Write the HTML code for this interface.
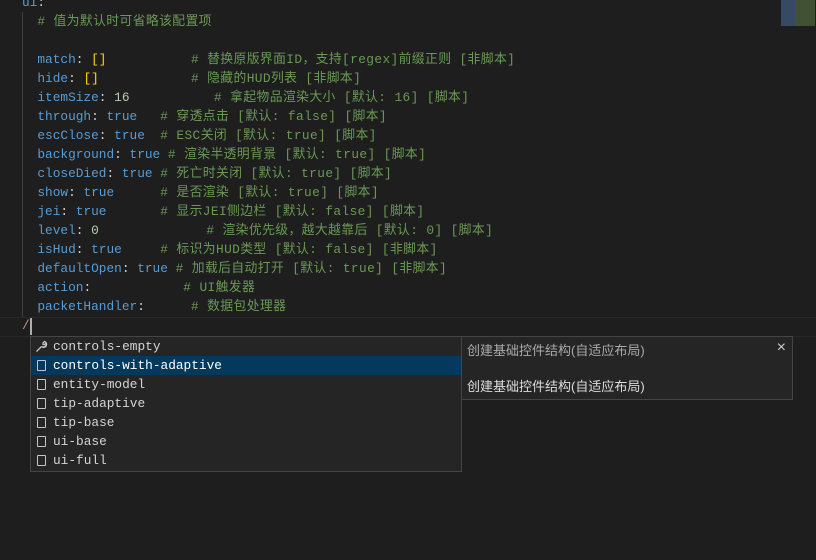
<!DOCTYPE html>
<html><head><meta charset="utf-8"><style>
body{margin:0;width:816px;height:560px;background:#1e1e1e;overflow:hidden;position:relative;font-family:"Liberation Mono","Noto Sans CJK SC",monospace;font-size:12.8px;}
.l{position:absolute;left:22px;height:19px;line-height:19px;white-space:pre;color:#d4d4d4}
.k{color:#569cd6}.v{color:#569cd6}.n{color:#b5cea8}.c{color:#6a9955;letter-spacing:0.4px}.b{color:#ffd700}
.sw{position:absolute;left:30px;top:336px;width:430px;height:134px;background:#252526;border:1px solid #454545}
.r{height:19px;line-height:19px;padding-left:22px;color:#d4d4d4;position:relative;white-space:pre}
.r.sel{background:#04395e;color:#fff}
.ic{position:absolute;left:6px;top:4px;width:9px;height:11px;border:1px solid #c5c5c5;border-radius:1px;box-sizing:border-box}
.dt{position:absolute;left:461px;top:336px;width:330px;height:62px;background:#252526;border:1px solid #454545;font-family:"Liberation Sans","Noto Sans CJK SC",sans-serif;font-size:13px;color:#ccc}
</style></head><body>
<div style="position:absolute;left:22px;top:12px;width:1px;height:305px;background:#404040"></div>
<div style="position:absolute;left:0;top:317px;width:816px;height:18px;border-top:1px solid #282828;border-bottom:1px solid #282828"></div>
<div style="position:absolute;left:781px;top:0;width:14px;height:26px;background:#3d5575;opacity:.8"></div>
<div style="position:absolute;left:795px;top:0;width:20px;height:26px;background:#4a5e3a;opacity:.8"></div>
<div class="l" style="top:-7px"><span class="k">ui</span>:</div>
<div class="l" style="top:12px">  <span class="c"># 值为默认时可省略该配置项</span></div>
<div class="l" style="top:50px">  <span class="k">match</span>: <span class="b">[]</span>           <span class="c"># 替换原版界面ID，支持[regex]前缀正则 [非脚本]</span></div>
<div class="l" style="top:69px">  <span class="k">hide</span>: <span class="b">[]</span>            <span class="c"># 隐藏的HUD列表 [非脚本]</span></div>
<div class="l" style="top:88px">  <span class="k">itemSize</span>: <span class="n">16</span>           <span class="c"># 拿起物品渲染大小 [默认: 16] [脚本]</span></div>
<div class="l" style="top:107px">  <span class="k">through</span>: <span class="v">true</span>   <span class="c"># 穿透点击 [默认: false] [脚本]</span></div>
<div class="l" style="top:126px">  <span class="k">escClose</span>: <span class="v">true</span>  <span class="c"># ESC关闭 [默认: true] [脚本]</span></div>
<div class="l" style="top:145px">  <span class="k">background</span>: <span class="v">true</span> <span class="c"># 渲染半透明背景 [默认: true] [脚本]</span></div>
<div class="l" style="top:164px">  <span class="k">closeDied</span>: <span class="v">true</span> <span class="c"># 死亡时关闭 [默认: true] [脚本]</span></div>
<div class="l" style="top:183px">  <span class="k">show</span>: <span class="v">true</span>      <span class="c"># 是否渲染 [默认: true] [脚本]</span></div>
<div class="l" style="top:202px">  <span class="k">jei</span>: <span class="v">true</span>       <span class="c"># 显示JEI侧边栏 [默认: false] [脚本]</span></div>
<div class="l" style="top:221px">  <span class="k">level</span>: <span class="n">0</span>              <span class="c"># 渲染优先级，越大越靠后 [默认: 0] [脚本]</span></div>
<div class="l" style="top:240px">  <span class="k">isHud</span>: <span class="v">true</span>     <span class="c"># 标识为HUD类型 [默认: false] [非脚本]</span></div>
<div class="l" style="top:259px">  <span class="k">defaultOpen</span>: <span class="v">true</span> <span class="c"># 加载后自动打开 [默认: true] [非脚本]</span></div>
<div class="l" style="top:278px">  <span class="k">action</span>:            <span class="c"># UI触发器</span></div>
<div class="l" style="top:297px">  <span class="k">packetHandler</span>:      <span class="c"># 数据包处理器</span></div>
<div class="l" style="top:316px;color:#ce9178">/</div>
<div style="position:absolute;left:30px;top:318px;width:2px;height:17px;background:#aeafad"></div>
<div class="sw">
<div class="r"><svg style="position:absolute;left:4px;top:3px" width="13" height="13" viewBox="0 0 13 13"><path d="M1.5 11.5l5-5M6.5 6.5a3 3 0 1 0 3-5l-1.5 1.5v1.5h1.5l1.5-1.5a3 3 0 0 1-4.5 3.5" stroke="#c5c5c5" stroke-width="1.3" fill="none"/></svg>controls-empty</div>
<div class="r sel"><span class="ic"></span>controls-with-adaptive</div>
<div class="r"><span class="ic"></span>entity-model</div>
<div class="r"><span class="ic"></span>tip-adaptive</div>
<div class="r"><span class="ic"></span>tip-base</div>
<div class="r"><span class="ic"></span>ui-base</div>
<div class="r"><span class="ic"></span>ui-full</div>
</div>
<div class="dt">
<div style="position:absolute;left:5px;top:3px;color:#aaa">创建基础控件结构(自适应布局)</div>
<div style="position:absolute;right:6px;top:2px;font-size:16px;color:#ccc">×</div>
<div style="position:absolute;left:5px;top:39px;color:#ddd">创建基础控件结构(自适应布局)</div>
</div>
</body></html>
